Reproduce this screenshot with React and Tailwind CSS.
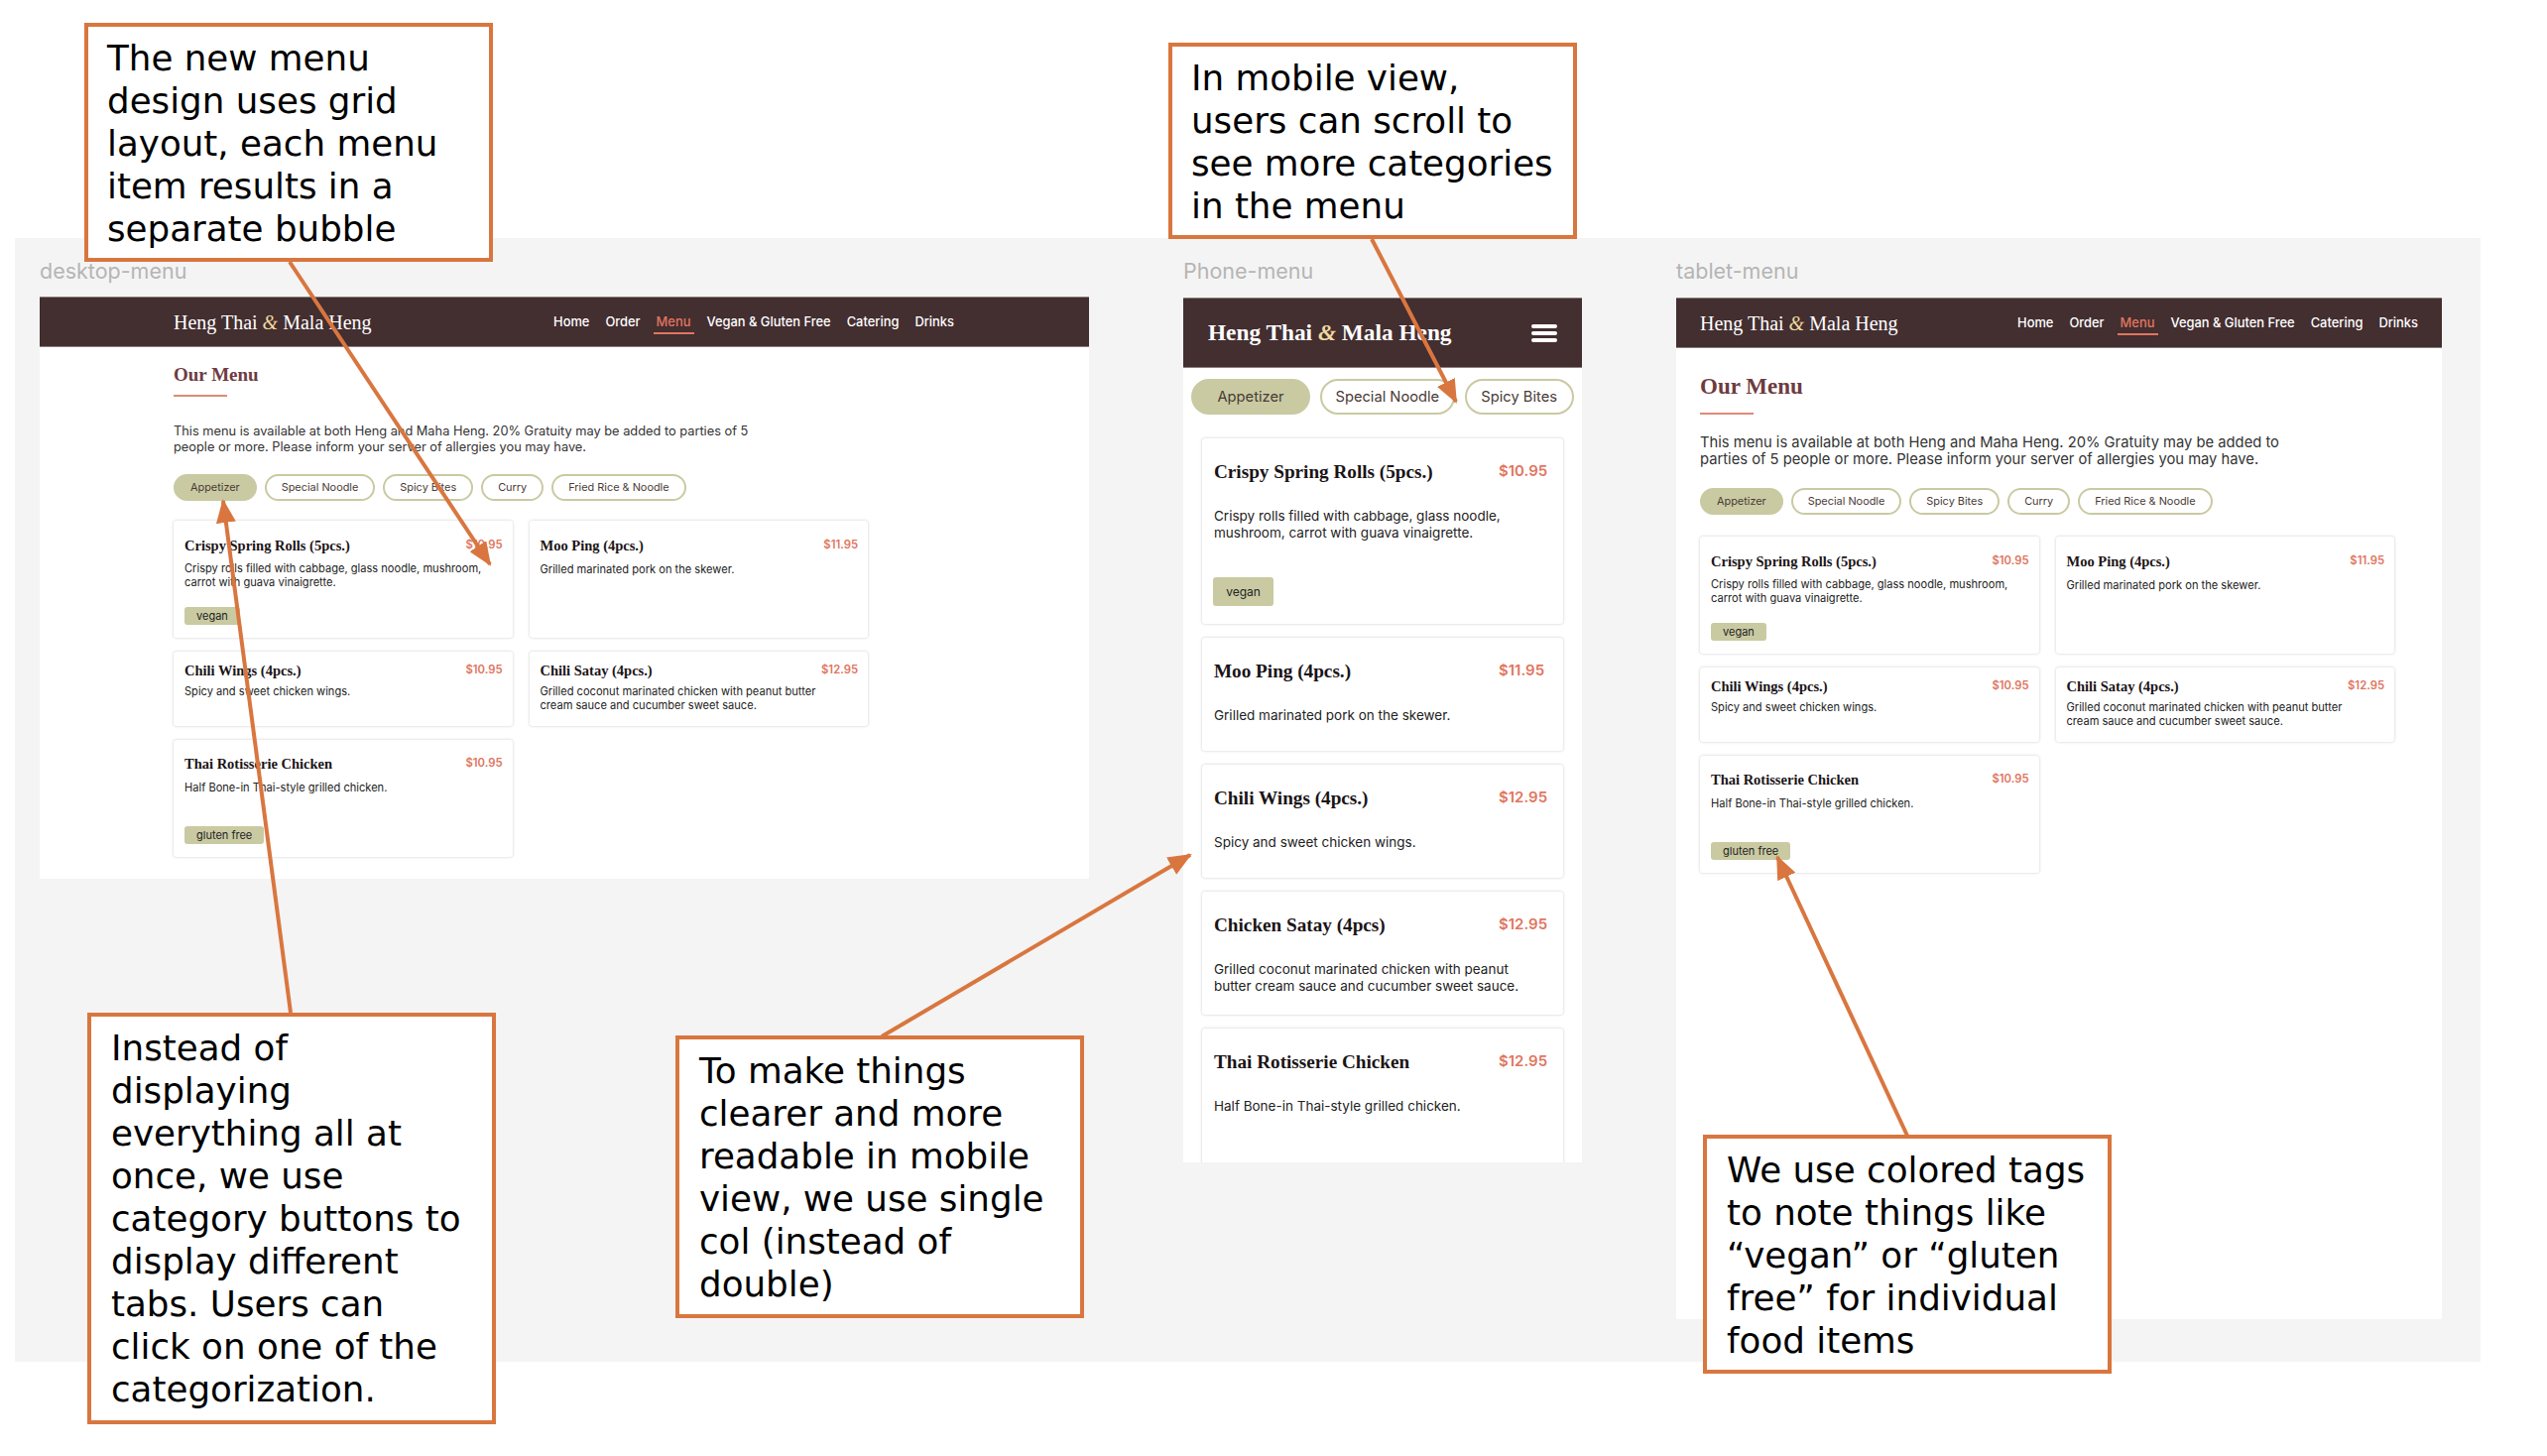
const serif = "font-['Liberation_Serif',serif]";

const tabs = ["Appetizer", "Special Noodle", "Spicy Bites", "Curry", "Fried Rice & Noodle"];
const links = ["Home", "Order", "Menu", "Vegan & Gluten Free", "Catering", "Drinks"];

const gridItems = [
  { name: "Crispy Spring Rolls (5pcs.)", price: "$10.95", desc: "Crispy rolls filled with cabbage, glass noodle, mushroom, carrot with guava vinaigrette.", tag: "vegan", h: "h-[118px] pt-[15px]", gap: "mt-[6px]" },
  { name: "Moo Ping (4pcs.)", price: "$11.95", desc: "Grilled marinated pork on the skewer.", h: "h-[118px] pt-[15px]", gap: "mt-[7px]" },
  { name: "Chili Wings (4pcs.)", price: "$10.95", desc: "Spicy and sweet chicken wings.", h: "h-[75px] pt-[9px]", gap: "mt-[4px]" },
  { name: "Chili Satay (4pcs.)", price: "$12.95", desc: "Grilled coconut marinated chicken with peanut butter cream sauce and cucumber sweet sauce.", h: "h-[75px] pt-[9px]", gap: "mt-[4px]" },
  { name: "Thai Rotisserie Chicken", price: "$10.95", desc: "Half Bone-in Thai-style grilled chicken.", tag: "gluten free", h: "h-[118px] pt-[14px]", gap: "mt-[7px]" },
];

const phoneItems = [
  { name: "Crispy Spring Rolls (5pcs.)", price: "$10.95", desc: "Crispy rolls filled with cabbage, glass noodle, mushroom, carrot with guava vinaigrette.", tag: "vegan", h: "h-[187px]" },
  { name: "Moo Ping (4pcs.)", price: "$11.95", desc: "Grilled marinated pork on the skewer.", h: "h-[114px]" },
  { name: "Chili Wings (4pcs.)", price: "$12.95", desc: "Spicy and sweet chicken wings.", h: "h-[114px]" },
  { name: "Chicken Satay (4pcs)", price: "$12.95", desc: "Grilled coconut marinated chicken with peanut butter cream sauce and cucumber sweet sauce.", h: "h-[124px]" },
  { name: "Thai Rotisserie Chicken", price: "$12.95", desc: "Half Bone-in Thai-style grilled chicken.", h: "h-[150px]" },
];

const callouts = [
  { cls: "left-[85px] top-[23px] w-[412px] h-[241px] pl-[19px]", lines: ["The new menu", "design uses grid", "layout, each menu", "item results in a", "separate bubble"] },
  { cls: "left-[88px] top-[1021px] w-[412px] h-[415px] pl-[20px]", lines: ["Instead of", "displaying", "everything all at", "once, we use", "category buttons to", "display different", "tabs. Users can", "click on one of the", "categorization."] },
  { cls: "left-[1178px] top-[43px] w-[412px] h-[198px] pl-[19px]", lines: ["In mobile view,", "users can scroll to", "see more categories", "in the menu"] },
  { cls: "left-[681px] top-[1044px] w-[412px] h-[285px] pl-[20px]", lines: ["To make things", "clearer and more", "readable in mobile", "view, we use single", "col (instead of", "double)"] },
  { cls: "left-[1717px] top-[1144px] w-[412px] h-[241px] pl-[20px]", lines: ["We use colored tags", "to note things like", "“vegan” or “gluten", "free” for individual", "food items"] },
];

function Logo({ className }) {
  return (
    <span className={`${serif} whitespace-nowrap text-white ${className}`}>
      Heng Thai <span className="italic text-[#f0d9a0]">&amp;</span> Mala Heng
    </span>
  );
}

function Nav({ wide }) {
  return (
    <div className={`flex h-[51px] items-center justify-between border-y border-[#8a8080] bg-[#432e30] ${wide ? "pl-[135px] pr-[136px]" : "pl-[24px] pr-[24px]"}`}>
      <Logo className="text-[20px] font-normal" />
      <div className="flex gap-4 font-['Inter',sans-serif] text-[12.9px] font-medium text-white">
        {links.map((l) =>
          l === "Menu" ? (
            <span key={l} className="relative text-[#e0765f]">
              {l}
              <span className="absolute -left-[3px] -right-[4px] top-[20px] h-[2px] bg-[#e0765f]"></span>
            </span>
          ) : (
            <span key={l}>{l}</span>
          )
        )}
      </div>
    </div>
  );
}

function Tabs({ items, className, tabClass }) {
  return (
    <div className={`flex font-['Inter',sans-serif] ${className}`}>
      {items.map((t, i) => (
        <span
          key={t}
          className={`flex shrink-0 items-center justify-center whitespace-nowrap rounded-full border-2 border-[#c9caa2] text-[#4a3a36] ${tabClass} ${i === 0 ? "bg-[#c9caa2]" : "bg-white"}`}
        >
          {t}
        </span>
      ))}
    </div>
  );
}

function GridCard({ item }) {
  return (
    <div className={`relative rounded-[3px] bg-white pl-[11px] pr-[10px] shadow-[0_0_3px_rgba(0,0,0,0.22)] ${item.h}`}>
      <div className="flex items-start justify-between">
        <span className={`${serif} text-[14.5px] font-bold leading-[20px] text-[#1a1416]`}>{item.name}</span>
        <span className="font-['Inter',sans-serif] text-[11.3px] font-semibold leading-[18px] text-[#e0765f]">{item.price}</span>
      </div>
      <p className={`w-[305px] font-['Inter',sans-serif] text-[11.1px] leading-[14px] text-[#222] ${item.gap}`}>{item.desc}</p>
      {item.tag && (
        <span className="absolute bottom-[13px] left-[11px] rounded-[3px] bg-[#c9caa2] px-3 font-['Inter',sans-serif] text-[11px] leading-[18px] text-[#222]">
          {item.tag}
        </span>
      )}
    </div>
  );
}

function MenuGrid({ className }) {
  return (
    <div className={`grid w-[700px] grid-cols-2 gap-x-[17px] gap-y-[14px] ${className}`}>
      {gridItems.map((item) => (
        <GridCard key={item.name} item={item} />
      ))}
    </div>
  );
}

function DesktopFrame() {
  return (
    <div className="w-[1058px] shrink-0">
      <p className="font-['Inter',sans-serif] text-[21.5px] leading-[26px] text-[#b5b5b5]">desktop-menu</p>
      <div className="mt-[13px] h-[587px] bg-white">
        <Nav wide />
        <div className="pl-[135px] pt-[16px]">
          <h2 className={`${serif} text-[19px] font-bold leading-[24px] text-[#6e3b40]`}>Our Menu</h2>
          <div className="mt-[8px] h-[2px] w-[54px] bg-[#e0897a]"></div>
          <p className="mt-[27px] w-[590px] font-['Inter',sans-serif] text-[12.8px] leading-[16px] text-[#333]">
            This menu is available at both Heng and Maha Heng. 20% Gratuity may be added to parties of 5 people or more. Please inform your server of allergies you may have.
          </p>
          <Tabs items={tabs} className="mt-[19px] gap-2" tabClass="h-[27px] px-[15px] text-[10.9px]" />
          <MenuGrid className="mt-[20px]" />
        </div>
      </div>
    </div>
  );
}

function PhoneFrame() {
  return (
    <div className="w-[402px] shrink-0">
      <p className="font-['Inter',sans-serif] text-[21.5px] leading-[26px] text-[#b5b5b5]">Phone-menu</p>
      <div className="mt-[14px] h-[872px] overflow-hidden bg-white">
        <div className="flex h-[71px] items-center justify-between border-y border-[#8a8080] bg-[#432e30] pl-[25px] pr-[25px]">
          <Logo className="text-[23.3px] font-bold" />
          <div className="flex w-[26px] flex-col gap-[3px]">
            <span className="h-[4px] rounded-full bg-white"></span>
            <span className="h-[4px] rounded-full bg-white"></span>
            <span className="h-[4px] rounded-full bg-white"></span>
          </div>
        </div>
        <Tabs items={tabs.slice(0, 3)} className="mt-[11px] gap-[9.5px] pl-[8px]" tabClass="h-[36px] min-w-[110px] px-[14px] text-[14.7px] first:min-w-[120px]" />
        <div className="mt-[24px] flex flex-col gap-[14px] px-[19px]">
          {phoneItems.map((item) => (
            <div key={item.name} className={`relative shrink-0 rounded-[3px] bg-white px-[12px] pt-[22px] shadow-[0_0_3px_rgba(0,0,0,0.22)] ${item.h}`}>
              <div className="flex justify-between pr-[4px]">
                <span className={`${serif} text-[19.2px] font-bold leading-[24px] text-[#1a1416]`}>{item.name}</span>
                <span className="w-[49px] whitespace-nowrap font-['Inter',sans-serif] text-[15px] font-semibold leading-[22px] text-[#e0765f]">{item.price}</span>
              </div>
              <p className="mt-[24px] pr-[20px] font-['Inter',sans-serif] text-[13.5px] leading-[16.5px] text-[#222]">{item.desc}</p>
              {item.tag && (
                <span className="absolute bottom-[18px] left-[11px] flex h-[29px] w-[61px] items-center justify-center rounded-[3px] bg-[#c9caa2] font-['Inter',sans-serif] text-[12px] text-[#222]">
                  {item.tag}
                </span>
              )}
            </div>
          ))}
        </div>
      </div>
    </div>
  );
}

function TabletFrame() {
  return (
    <div className="w-[772px] shrink-0">
      <p className="font-['Inter',sans-serif] text-[21.5px] leading-[26px] text-[#b5b5b5]">tablet-menu</p>
      <div className="mt-[14px] h-[1030px] bg-white">
        <Nav />
        <div className="pl-[24px] pt-[25px]">
          <h2 className={`${serif} text-[23px] font-bold leading-[28px] text-[#6e3b40]`}>Our Menu</h2>
          <div className="mt-[12px] h-[2px] w-[54px] bg-[#e0897a]"></div>
          <p className="mt-[20px] w-[610px] font-['Inter',sans-serif] text-[14.75px] leading-[17px] text-[#333]">
            This menu is available at both Heng and Maha Heng. 20% Gratuity may be added to parties of 5 people or more. Please inform your server of allergies you may have.
          </p>
          <Tabs items={tabs} className="mt-[20px] gap-2" tabClass="h-[27px] px-[15px] text-[10.9px]" />
          <MenuGrid className="mt-[22px]" />
        </div>
      </div>
    </div>
  );
}

function Arrows() {
  const color = "#d9763f";
  return (
    <svg className="pointer-events-none absolute left-0 top-0" width="2568" height="1468" viewBox="0 0 2568 1468" fill="none">
      <defs>
        <marker id="head" markerWidth="24" markerHeight="20" refX="22" refY="10" orient="auto" markerUnits="userSpaceOnUse">
          <path d="M0 0L24 10L0 20Z" fill={color} />
        </marker>
      </defs>
      <g stroke={color} strokeWidth="4">
        <line x1="292" y1="264" x2="494" y2="569" markerEnd="url(#head)" />
        <line x1="293" y1="1021" x2="225" y2="505" markerEnd="url(#head)" />
        <line x1="1383" y1="241" x2="1468" y2="405" markerEnd="url(#head)" />
        <line x1="889" y1="1045" x2="1200" y2="862" markerEnd="url(#head)" />
        <line x1="1923" y1="1145" x2="1792" y2="864" markerEnd="url(#head)" />
      </g>
    </svg>
  );
}

export default function App() {
  return (
    <div className="relative h-[1468px] w-[2568px] overflow-hidden bg-white">
      <div className="absolute left-[15px] top-[240px] flex h-[1133px] w-[2486px] gap-[95px] bg-[#f4f4f4] pl-[25px] pt-[20px]">
        <DesktopFrame />
        <PhoneFrame />
        <TabletFrame />
      </div>
      <Arrows />
      {callouts.map((c) => (
        <div
          key={c.lines[0]}
          className={`absolute border-4 border-[#d9763f] bg-white pt-[10px] font-['DejaVu_Sans',sans-serif] text-[35.7px] leading-[43px] text-black ${c.cls}`}
        >
          {c.lines.map((l) => (
            <div key={l} className="whitespace-nowrap">{l}</div>
          ))}
        </div>
      ))}
    </div>
  );
}
